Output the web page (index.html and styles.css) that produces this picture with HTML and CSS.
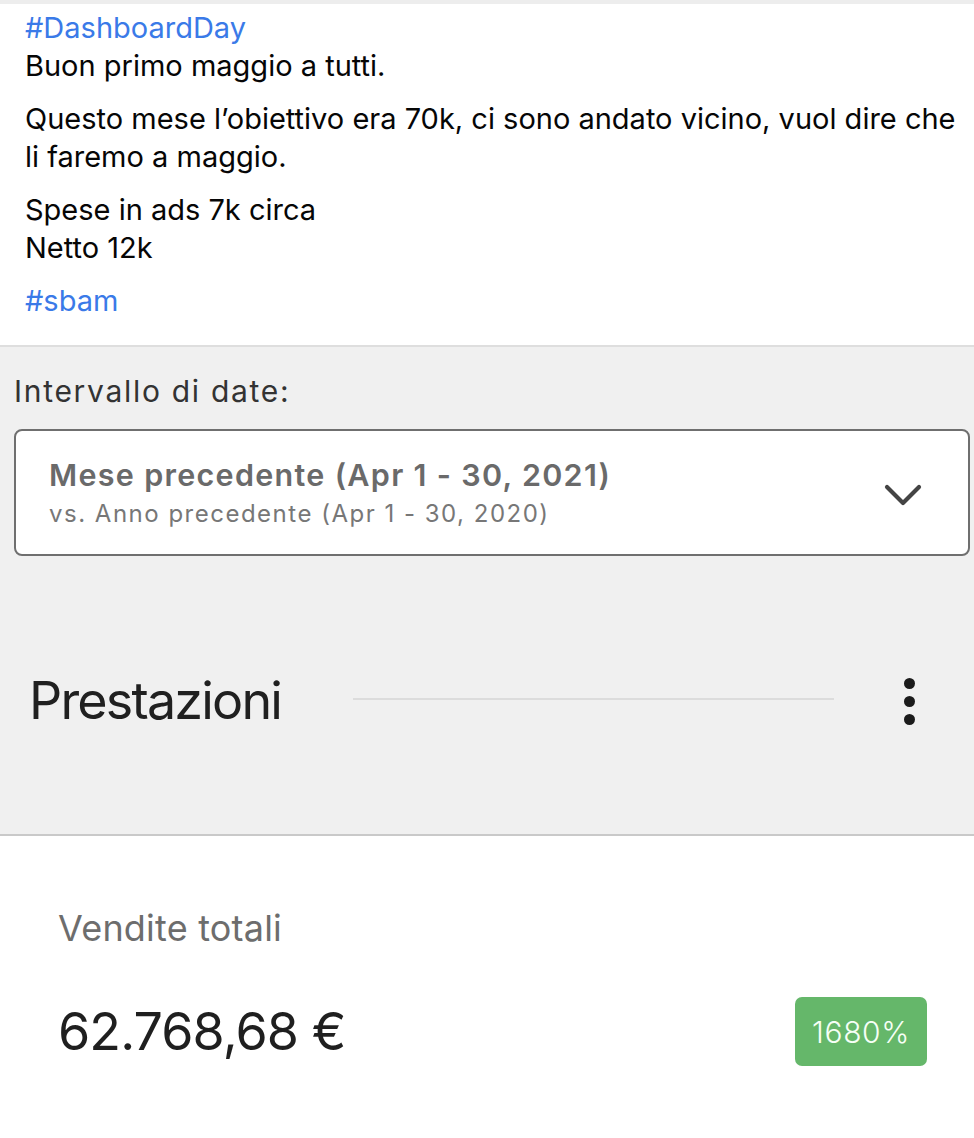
FILE: index.html
```html
<!DOCTYPE html>
<html lang="it">
<head>
<meta charset="utf-8">
<title>DashboardDay</title>
<link rel="stylesheet" href="styles.css">
</head>
<body>
<section class="post">
  <p class="tag">#DashboardDay</p>
  <p class="text">Buon primo maggio a tutti.</p>
  <p class="text para">Questo mese l’obiettivo era 70k, ci sono andato vicino, vuol dire che li faremo a maggio.</p>
  <p class="text para">Spese in ads 7k circa<br>Netto 12k</p>
  <p class="tag para">#sbam</p>
</section>
<section class="dash">
  <div class="range-label">Intervallo di date:</div>
  <div class="select">
    <div class="select-text">
      <div class="select-main">Mese precedente (Apr 1 - 30, 2021)</div>
      <div class="select-sub">vs. Anno precedente (Apr 1 - 30, 2020)</div>
    </div>
    <svg class="chev" width="38" height="24" viewBox="0 0 38 24"><polyline points="3,3 19,19 35,3" fill="none" stroke="#444" stroke-width="4.2" stroke-linecap="round" stroke-linejoin="round"/></svg>
  </div>
  <div class="perf">
    <h2 class="perf-title">Prestazioni</h2>
    <div class="rule"></div>
    <div class="kebab"><span></span><span></span><span></span></div>
  </div>
</section>
<section class="metric">
  <div class="metric-label">Vendite totali</div>
  <div class="metric-row">
    <div class="metric-value">62.768,68 €</div>
    <div class="badge">1680%</div>
  </div>
</section>
</body>
</html>
```
FILE: styles.css
```css
* { box-sizing: border-box; }
html, body { margin: 0; padding: 0; background: #fff; }
body { font-family: Inter, "Noto Sans", sans-serif; color: #050505; width: 974px; }

.post {
  border-top: 4px solid #ededed;
  padding: 5px 18px 25px 25px;
}
.post p { margin: 0; font-size: 29px; line-height: 38px; }
.post .para { margin-top: 15px; }
.tag { color: #3a7ae8; }
.text { color: #060606; }

.dash {
  background: #f0f0f0;
  border-top: 2px solid #dedede;
  border-bottom: 2px solid #c9c9c9;
  padding: 26px 4px 103px 14px;
}
.range-label {
  font-size: 30px;
  line-height: 36px;
  color: #333;
  letter-spacing: 1.7px;
}
.select {
  margin-top: 20px;
  height: 127px;
  background: #fff;
  border: 2px solid #6f6f6f;
  border-radius: 8px;
  display: flex;
  align-items: center;
  justify-content: space-between;
  padding: 0 46px 0 33px;
}
.select-main {
  font-size: 30.5px;
  line-height: 36px;
  font-weight: 600;
  color: #6a6a6a;
  letter-spacing: 1.3px;
}
.select-sub {
  margin-top: 6px;
  font-size: 24px;
  line-height: 30px;
  color: #777;
  letter-spacing: 1.5px;
}
.chev { display: block; margin-top: 6px; }

.perf {
  margin-top: 115px;
  display: flex;
  align-items: center;
  height: 60px;
  padding-right: 55px;
}
.perf-title {
  flex: 0 0 339px;
  margin: 0;
  padding-left: 15px;
  font-size: 52px;
  line-height: 60px;
  font-weight: 400;
  color: #202020;
  letter-spacing: -1.8px;
}
.rule {
  flex: 1;
  height: 2px;
  background: #dcdcdc;
  margin: -4px 69px 0 0;
}
.kebab {
  width: 12px;
  display: flex;
  flex-direction: column;
  align-items: center;
  gap: 7px;
}
.kebab span {
  width: 11px;
  height: 11px;
  border-radius: 50%;
  background: #1b1b1b;
}

.metric {
  padding: 70px 47px 60px 58px;
}
.metric-label {
  font-size: 36px;
  line-height: 44px;
  color: #6d6d6d;
  letter-spacing: 0.2px;
}
.metric-row {
  margin-top: 47px;
  display: flex;
  align-items: center;
  justify-content: space-between;
}
.metric-value {
  font-size: 52px;
  line-height: 64px;
  color: #1f1f1f;
  letter-spacing: -0.9px;
}
.badge {
  width: 132px;
  height: 69px;
  border-radius: 7px;
  background: #65b76a;
  color: #f6fff6;
  font-size: 30px;
  font-weight: 300;
  letter-spacing: 0.6px;
  display: flex;
  align-items: center;
  justify-content: center;
}
```
